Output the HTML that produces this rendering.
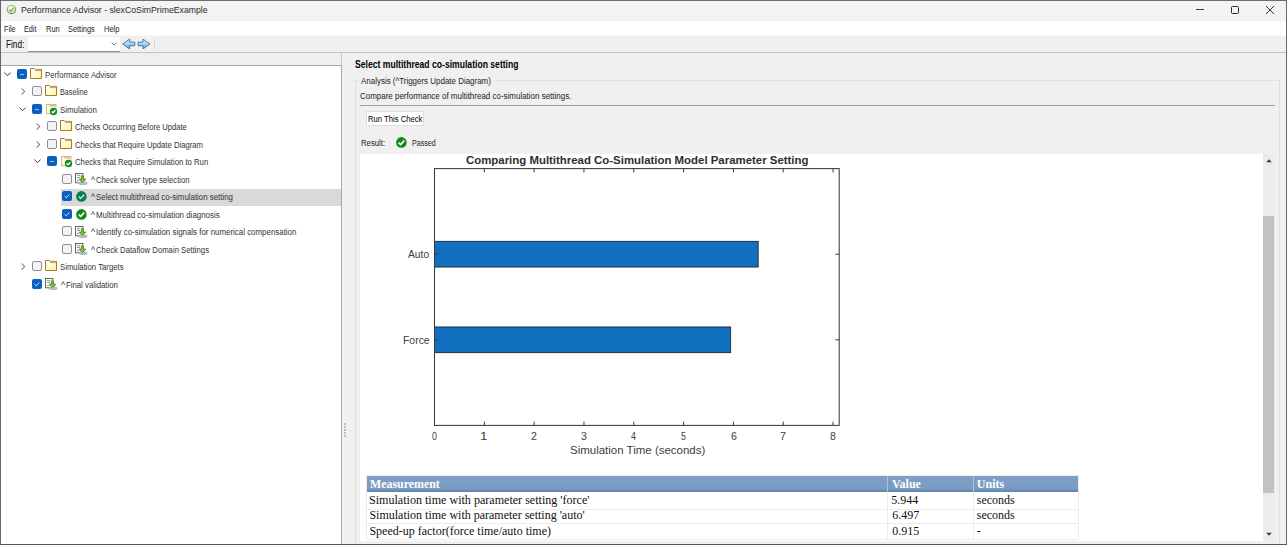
<!DOCTYPE html>
<html><head><meta charset="utf-8"><title>Performance Advisor</title>
<style>
html,body{margin:0;padding:0;}
body{width:1287px;height:545px;overflow:hidden;position:relative;background:#f0f0f0;font-family:"Liberation Sans",sans-serif;}
.a{position:absolute;}
.t{position:absolute;white-space:pre;}
.cb{width:10px;height:10px;box-sizing:border-box;border:1px solid #8f8f8f;border-radius:2px;background:#f3f3f3;}
.cbb{width:10px;height:10px;box-sizing:border-box;border-radius:2px;background:#0a5fc2;}
</style></head><body>
<svg width="0" height="0" style="position:absolute"><defs>
<linearGradient id="fgrad" x1="0" y1="0" x2="1" y2="1"><stop offset="0" stop-color="#ffffff"/><stop offset="0.45" stop-color="#fffbe3"/><stop offset="1" stop-color="#fff08a"/></linearGradient>
<linearGradient id="agrad" x1="0" y1="0" x2="0" y2="1"><stop offset="0" stop-color="#d8ecfa"/><stop offset="0.45" stop-color="#b5d8f2"/><stop offset="1" stop-color="#5b92c6"/></linearGradient>
<linearGradient id="tring" x1="0" y1="0" x2="0" y2="1"><stop offset="0" stop-color="#a2d05e"/><stop offset="1" stop-color="#5f8f3c"/></linearGradient>
<radialGradient id="tig" cx="0.4" cy="0.35" r="0.7"><stop offset="0" stop-color="#ffffff"/><stop offset="1" stop-color="#cfcfcf"/></radialGradient>
</defs></svg>

<!-- title bar -->
<div class="a" style="left:0;top:0;width:1287px;height:21px;background:#f3f3f3"></div>
<svg class="a" style="left:6px;top:4px" width="11" height="11" viewBox="0 0 11 11">
<circle cx="5.45" cy="5.4" r="4.2" fill="url(#tig)" stroke="url(#tring)" stroke-width="1.1"/>
<path d="M3.2 5.7 L4.8 7.1 L7.8 3.9" fill="none" stroke="#6fb334" stroke-width="1.3"/></svg>
<div class="t" style="left:20.50px;top:5px;font-size:9.8px;line-height:9.8px;font-weight:400;font-family:'Liberation Sans',sans-serif;color:#2a2a2a;letter-spacing:0px;transform:scaleX(0.8881);transform-origin:0 0;">Performance Advisor - slexCoSimPrimeExample</div>
<div class="a" style="left:1196px;top:9px;width:8px;height:1px;background:#3a3a3a"></div>
<div class="a" style="left:1231px;top:6px;width:8px;height:8px;box-sizing:border-box;border:1px solid #2a2a2a;border-radius:1.5px"></div>
<svg class="a" style="left:1265px;top:5px" width="10" height="10" viewBox="0 0 10 10"><path d="M1 1 L9 9 M9 1 L1 9" stroke="#2a2a2a" stroke-width="0.95"/></svg>

<!-- menu -->
<div class="a" style="left:0;top:21px;width:1287px;height:14px;background:#ffffff"></div><div class="a" style="left:0;top:35px;width:1287px;height:1px;background:#f7f7f7"></div>
<div class="t" style="left:4.20px;top:25px;font-size:8.5px;line-height:8.5px;font-weight:400;font-family:'Liberation Sans',sans-serif;color:#222222;letter-spacing:0px;transform:scaleX(0.8429);transform-origin:0 0;">File</div>
<div class="t" style="left:24.10px;top:25px;font-size:8.5px;line-height:8.5px;font-weight:400;font-family:'Liberation Sans',sans-serif;color:#222222;letter-spacing:0px;transform:scaleX(0.8533);transform-origin:0 0;">Edit</div>
<div class="t" style="left:45.80px;top:25px;font-size:8.5px;line-height:8.5px;font-weight:400;font-family:'Liberation Sans',sans-serif;color:#222222;letter-spacing:0px;transform:scaleX(0.8800);transform-origin:0 0;">Run</div>
<div class="t" style="left:68.00px;top:25px;font-size:8.5px;line-height:8.5px;font-weight:400;font-family:'Liberation Sans',sans-serif;color:#222222;letter-spacing:0px;transform:scaleX(0.8710);transform-origin:0 0;">Settings</div>
<div class="t" style="left:103.70px;top:25px;font-size:8.5px;line-height:8.5px;font-weight:400;font-family:'Liberation Sans',sans-serif;color:#222222;letter-spacing:0px;transform:scaleX(0.8833);transform-origin:0 0;">Help</div>

<!-- toolbar -->
<div class="a" style="left:0;top:36px;width:1287px;height:16px;background:#f0f0f0"></div>
<div class="t" style="left:5.93px;top:40px;font-size:10px;line-height:10px;font-weight:400;font-family:'Liberation Sans',sans-serif;color:#000;letter-spacing:0px;transform:scaleX(0.8214);transform-origin:0 0;">Find:</div>
<div class="a" style="left:27.7px;top:37px;width:92.5px;height:14.5px;background:#fff;border-bottom:1px solid #8f8f8f;box-sizing:border-box"></div>
<svg class="a" style="left:111px;top:42px" width="7" height="4" viewBox="0 0 7 4"><path d="M0.6 0.6 L3 3 L5.4 0.6" fill="none" stroke="#555" stroke-width="0.8"/></svg>
<svg class="a" style="left:122px;top:38px" width="14" height="12" viewBox="0 0 14 12"><path d="M0.7 6 L7.6 1.1 V4.1 H12.8 V7.7 H7.6 V10.9 Z" fill="url(#agrad)" stroke="#3a72a6" stroke-width="0.9" stroke-linejoin="round"/></svg>
<svg class="a" style="left:137px;top:38px" width="14" height="12" viewBox="0 0 14 12"><path d="M13 6 L6 1.1 V4.1 H1.1 V7.7 H6 V10.9 Z" fill="url(#agrad)" stroke="#3a72a6" stroke-width="0.9" stroke-linejoin="round"/></svg>
<div class="a" style="left:154px;top:38px;width:1px;height:12px;background:#d8d8d8"></div>
<div class="a" style="left:0;top:52px;width:1287px;height:1px;background:#c4c4c4"></div>

<!-- left panel -->
<div class="a" style="left:1px;top:53px;width:340px;height:12px;background:#efefef"></div>
<div class="a" style="left:1px;top:65px;width:341px;height:1px;background:#a3a7b1"></div>
<div class="a" style="left:1px;top:66px;width:340px;height:479px;background:#ffffff"></div>
<div class="a" style="left:341px;top:53px;width:1px;height:12px;background:#cbcbcb"></div><div class="a" style="left:341px;top:66px;width:1px;height:479px;background:#a6aab6"></div>
<svg class="a" style="left:4px;top:72px" width="8" height="5" viewBox="0 0 8 5"><path d="M0.4 0.6 L3.5 3.7 L6.6 0.6" fill="none" stroke="#2a2a2a" stroke-width="0.95"/></svg><div class="a cbb" style="left:17px;top:69px;"><div style="position:absolute;left:3px;top:5px;width:4px;height:1px;background:#9fc0ea"></div></div><svg class="a" style="left:30px;top:68px" width="13" height="12" viewBox="0 0 13 12"><g><path d="M0.5 0.5 H4.4 L5.2 1.4 H11.5 V10.5 H0.5 Z" fill="url(#fgrad)" stroke="#a97a28" stroke-width="1"/><rect x="5" y="1.6" width="6.2" height="1.5" fill="#d2a85a"/></g></svg><div class="t" style="left:45.20px;top:71px;font-size:8.5px;line-height:8.5px;font-weight:400;font-family:'Liberation Sans',sans-serif;color:#333333;letter-spacing:0px;transform:scaleX(0.9076);transform-origin:0 0;">Performance Advisor</div><svg class="a" style="left:20.5px;top:88px" width="5" height="8" viewBox="0 0 5 8"><path d="M0.6 0.5 L3.7 3.6 L0.6 6.7" fill="none" stroke="#7a7a7a" stroke-width="1.05"/></svg><div class="a cb" style="left:32px;top:86px;"></div><svg class="a" style="left:45px;top:85px" width="13" height="12" viewBox="0 0 13 12"><g><path d="M0.5 0.5 H4.4 L5.2 1.4 H11.5 V10.5 H0.5 Z" fill="url(#fgrad)" stroke="#a97a28" stroke-width="1"/><rect x="5" y="1.6" width="6.2" height="1.5" fill="#d2a85a"/></g></svg><div class="t" style="left:60.20px;top:88px;font-size:8.5px;line-height:8.5px;font-weight:400;font-family:'Liberation Sans',sans-serif;color:#333333;letter-spacing:0px;transform:scaleX(0.8515);transform-origin:0 0;">Baseline</div><svg class="a" style="left:19px;top:107px" width="8" height="5" viewBox="0 0 8 5"><path d="M0.4 0.6 L3.5 3.7 L6.6 0.6" fill="none" stroke="#2a2a2a" stroke-width="0.95"/></svg><div class="a cbb" style="left:32px;top:104px;"><div style="position:absolute;left:3px;top:5px;width:4px;height:1px;background:#9fc0ea"></div></div><svg class="a" style="left:45px;top:103px" width="13" height="13" viewBox="0 0 13 13"><rect x="1.5" y="1.5" width="9.4" height="9.2" fill="url(#fgrad)" stroke="#cfb27a" stroke-width="0.9"/><rect x="4.2" y="2" width="6.3" height="1.5" fill="#dcc28e"/><circle cx="8.5" cy="8.5" r="3.65" fill="#0f8d24"/><path d="M6.6 8.5 L8 9.8 L10.4 7.3" fill="none" stroke="#fff" stroke-width="1.3"/></svg><div class="t" style="left:60.20px;top:106px;font-size:8.5px;line-height:8.5px;font-weight:400;font-family:'Liberation Sans',sans-serif;color:#333333;letter-spacing:0px;transform:scaleX(0.9275);transform-origin:0 0;">Simulation</div><svg class="a" style="left:35.5px;top:123px" width="5" height="8" viewBox="0 0 5 8"><path d="M0.6 0.5 L3.7 3.6 L0.6 6.7" fill="none" stroke="#7a7a7a" stroke-width="1.05"/></svg><div class="a cb" style="left:47px;top:121px;"></div><svg class="a" style="left:60px;top:120px" width="13" height="12" viewBox="0 0 13 12"><g><path d="M0.5 0.5 H4.4 L5.2 1.4 H11.5 V10.5 H0.5 Z" fill="url(#fgrad)" stroke="#a97a28" stroke-width="1"/><rect x="5" y="1.6" width="6.2" height="1.5" fill="#d2a85a"/></g></svg><div class="t" style="left:75.20px;top:123px;font-size:8.5px;line-height:8.5px;font-weight:400;font-family:'Liberation Sans',sans-serif;color:#333333;letter-spacing:0px;transform:scaleX(0.8968);transform-origin:0 0;">Checks Occurring Before Update</div><svg class="a" style="left:35.5px;top:141px" width="5" height="8" viewBox="0 0 5 8"><path d="M0.6 0.5 L3.7 3.6 L0.6 6.7" fill="none" stroke="#7a7a7a" stroke-width="1.05"/></svg><div class="a cb" style="left:47px;top:139px;"></div><svg class="a" style="left:60px;top:138px" width="13" height="12" viewBox="0 0 13 12"><g><path d="M0.5 0.5 H4.4 L5.2 1.4 H11.5 V10.5 H0.5 Z" fill="url(#fgrad)" stroke="#a97a28" stroke-width="1"/><rect x="5" y="1.6" width="6.2" height="1.5" fill="#d2a85a"/></g></svg><div class="t" style="left:75.20px;top:141px;font-size:8.5px;line-height:8.5px;font-weight:400;font-family:'Liberation Sans',sans-serif;color:#333333;letter-spacing:0px;transform:scaleX(0.9064);transform-origin:0 0;">Checks that Require Update Diagram</div><svg class="a" style="left:34px;top:159px" width="8" height="5" viewBox="0 0 8 5"><path d="M0.4 0.6 L3.5 3.7 L6.6 0.6" fill="none" stroke="#2a2a2a" stroke-width="0.95"/></svg><div class="a cbb" style="left:47px;top:156px;"><div style="position:absolute;left:3px;top:5px;width:4px;height:1px;background:#9fc0ea"></div></div><svg class="a" style="left:60px;top:155px" width="13" height="13" viewBox="0 0 13 13"><rect x="1.5" y="1.5" width="9.4" height="9.2" fill="url(#fgrad)" stroke="#cfb27a" stroke-width="0.9"/><rect x="4.2" y="2" width="6.3" height="1.5" fill="#dcc28e"/><circle cx="8.5" cy="8.5" r="3.65" fill="#0f8d24"/><path d="M6.6 8.5 L8 9.8 L10.4 7.3" fill="none" stroke="#fff" stroke-width="1.3"/></svg><div class="t" style="left:75.20px;top:158px;font-size:8.5px;line-height:8.5px;font-weight:400;font-family:'Liberation Sans',sans-serif;color:#333333;letter-spacing:0px;transform:scaleX(0.9096);transform-origin:0 0;">Checks that Require Simulation to Run</div><div class="a cb" style="left:62px;top:174px;"></div><svg class="a" style="left:75px;top:173px" width="13" height="13" viewBox="0 0 13 13"><rect x="0.5" y="0.5" width="7.4" height="9.3" fill="#fbfbfb" stroke="#5e5e5e" stroke-width="0.95"/><path d="M2 2.6 H5.3 M2 4.5 H5 M2 7.5 H4.2" stroke="#8a8a8a" stroke-width="0.9"/><ellipse cx="8" cy="10.2" rx="4.3" ry="1.5" fill="#b3c3ca" stroke="#8fa3ab" stroke-width="0.5"/><path d="M6.4 2.9 H8.4 V6.1 H10.9 L7.4 9.6 L4.2 6.1 H6.4 Z" fill="#86bf3a" stroke="#4a8014" stroke-width="0.8"/></svg><div class="t" style="left:90.90px;top:176px;font-size:8.5px;line-height:8.5px;font-weight:400;font-family:'Liberation Sans',sans-serif;color:#333333;letter-spacing:0px;transform:scaleX(1.0000);transform-origin:0 0;">^</div><div class="t" style="left:95.90px;top:176px;font-size:8.5px;line-height:8.5px;font-weight:400;font-family:'Liberation Sans',sans-serif;color:#333333;letter-spacing:0px;transform:scaleX(0.9039);transform-origin:0 0;">Check solver type selection</div><div class="a" style="left:60.5px;top:188.5px;width:280.5px;height:17.5px;background:#d9d9d9"></div><div class="a cbb" style="left:62px;top:191px;"><svg style="position:absolute;left:0;top:0" width="10" height="10" viewBox="0 0 10 10"><path d="M2.6 5.2 L4.2 6.7 L7.4 3.5" fill="none" stroke="#fff" stroke-width="0.85"/></svg></div><svg class="a" style="left:75.5px;top:191px" width="11" height="11" viewBox="0 0 11 11"><circle cx="5.4" cy="5.4" r="5.3" fill="#0a7e45"/><path d="M2.7 5.5 L4.6 7.3 L8.2 3.6" fill="none" stroke="#a9d6f2" stroke-width="1.55"/></svg><div class="t" style="left:90.90px;top:193px;font-size:8.5px;line-height:8.5px;font-weight:400;font-family:'Liberation Sans',sans-serif;color:#333333;letter-spacing:0px;transform:scaleX(1.0000);transform-origin:0 0;">^</div><div class="t" style="left:95.90px;top:193px;font-size:8.5px;line-height:8.5px;font-weight:400;font-family:'Liberation Sans',sans-serif;color:#333333;letter-spacing:0px;transform:scaleX(0.9264);transform-origin:0 0;">Select multithread co-simulation setting</div><div class="a cbb" style="left:62px;top:209px;"><svg style="position:absolute;left:0;top:0" width="10" height="10" viewBox="0 0 10 10"><path d="M2.6 5.2 L4.2 6.7 L7.4 3.5" fill="none" stroke="#fff" stroke-width="0.85"/></svg></div><svg class="a" style="left:75.5px;top:209px" width="11" height="11" viewBox="0 0 11 11"><circle cx="5.4" cy="5.4" r="5.3" fill="#108a1e"/><path d="M2.7 5.5 L4.6 7.3 L8.2 3.6" fill="none" stroke="#ffffff" stroke-width="1.55"/></svg><div class="t" style="left:90.90px;top:211px;font-size:8.5px;line-height:8.5px;font-weight:400;font-family:'Liberation Sans',sans-serif;color:#333333;letter-spacing:0px;transform:scaleX(1.0000);transform-origin:0 0;">^</div><div class="t" style="left:95.90px;top:211px;font-size:8.5px;line-height:8.5px;font-weight:400;font-family:'Liberation Sans',sans-serif;color:#333333;letter-spacing:0px;transform:scaleX(0.9316);transform-origin:0 0;">Multithread co-simulation diagnosis</div><div class="a cb" style="left:62px;top:226px;"></div><svg class="a" style="left:75px;top:226px" width="13" height="13" viewBox="0 0 13 13"><rect x="0.5" y="0.5" width="7.4" height="9.3" fill="#fbfbfb" stroke="#5e5e5e" stroke-width="0.95"/><path d="M2 2.6 H5.3 M2 4.5 H5 M2 7.5 H4.2" stroke="#8a8a8a" stroke-width="0.9"/><ellipse cx="8" cy="10.2" rx="4.3" ry="1.5" fill="#b3c3ca" stroke="#8fa3ab" stroke-width="0.5"/><path d="M6.4 2.9 H8.4 V6.1 H10.9 L7.4 9.6 L4.2 6.1 H6.4 Z" fill="#86bf3a" stroke="#4a8014" stroke-width="0.8"/></svg><div class="t" style="left:90.90px;top:228px;font-size:8.5px;line-height:8.5px;font-weight:400;font-family:'Liberation Sans',sans-serif;color:#333333;letter-spacing:0px;transform:scaleX(1.0000);transform-origin:0 0;">^</div><div class="t" style="left:95.90px;top:228px;font-size:8.5px;line-height:8.5px;font-weight:400;font-family:'Liberation Sans',sans-serif;color:#333333;letter-spacing:0px;transform:scaleX(0.9302);transform-origin:0 0;">Identify co-simulation signals for numerical compensation</div><div class="a cb" style="left:62px;top:244px;"></div><svg class="a" style="left:75px;top:243px" width="13" height="13" viewBox="0 0 13 13"><rect x="0.5" y="0.5" width="7.4" height="9.3" fill="#fbfbfb" stroke="#5e5e5e" stroke-width="0.95"/><path d="M2 2.6 H5.3 M2 4.5 H5 M2 7.5 H4.2" stroke="#8a8a8a" stroke-width="0.9"/><ellipse cx="8" cy="10.2" rx="4.3" ry="1.5" fill="#b3c3ca" stroke="#8fa3ab" stroke-width="0.5"/><path d="M6.4 2.9 H8.4 V6.1 H10.9 L7.4 9.6 L4.2 6.1 H6.4 Z" fill="#86bf3a" stroke="#4a8014" stroke-width="0.8"/></svg><div class="t" style="left:90.90px;top:246px;font-size:8.5px;line-height:8.5px;font-weight:400;font-family:'Liberation Sans',sans-serif;color:#333333;letter-spacing:0px;transform:scaleX(1.0000);transform-origin:0 0;">^</div><div class="t" style="left:95.90px;top:246px;font-size:8.5px;line-height:8.5px;font-weight:400;font-family:'Liberation Sans',sans-serif;color:#333333;letter-spacing:0px;transform:scaleX(0.9097);transform-origin:0 0;">Check Dataflow Domain Settings</div><svg class="a" style="left:20.5px;top:263px" width="5" height="8" viewBox="0 0 5 8"><path d="M0.6 0.5 L3.7 3.6 L0.6 6.7" fill="none" stroke="#7a7a7a" stroke-width="1.05"/></svg><div class="a cb" style="left:32px;top:261px;"></div><svg class="a" style="left:45px;top:260px" width="13" height="12" viewBox="0 0 13 12"><g><path d="M0.5 0.5 H4.4 L5.2 1.4 H11.5 V10.5 H0.5 Z" fill="url(#fgrad)" stroke="#a97a28" stroke-width="1"/><rect x="5" y="1.6" width="6.2" height="1.5" fill="#d2a85a"/></g></svg><div class="t" style="left:60.20px;top:263px;font-size:8.5px;line-height:8.5px;font-weight:400;font-family:'Liberation Sans',sans-serif;color:#333333;letter-spacing:0px;transform:scaleX(0.9114);transform-origin:0 0;">Simulation Targets</div><div class="a cbb" style="left:32px;top:279px;"><svg style="position:absolute;left:0;top:0" width="10" height="10" viewBox="0 0 10 10"><path d="M2.6 5.2 L4.2 6.7 L7.4 3.5" fill="none" stroke="#fff" stroke-width="0.85"/></svg></div><svg class="a" style="left:45px;top:278px" width="13" height="13" viewBox="0 0 13 13"><rect x="0.5" y="0.5" width="7.4" height="9.3" fill="#fbfbfb" stroke="#5e5e5e" stroke-width="0.95"/><path d="M2 2.6 H5.3 M2 4.5 H5 M2 7.5 H4.2" stroke="#8a8a8a" stroke-width="0.9"/><ellipse cx="8" cy="10.2" rx="4.3" ry="1.5" fill="#b3c3ca" stroke="#8fa3ab" stroke-width="0.5"/><path d="M6.4 2.9 H8.4 V6.1 H10.9 L7.4 9.6 L4.2 6.1 H6.4 Z" fill="#86bf3a" stroke="#4a8014" stroke-width="0.8"/></svg><div class="t" style="left:60.90px;top:281px;font-size:8.5px;line-height:8.5px;font-weight:400;font-family:'Liberation Sans',sans-serif;color:#333333;letter-spacing:0px;transform:scaleX(1.0000);transform-origin:0 0;">^</div><div class="t" style="left:65.90px;top:281px;font-size:8.5px;line-height:8.5px;font-weight:400;font-family:'Liberation Sans',sans-serif;color:#333333;letter-spacing:0px;transform:scaleX(0.9140);transform-origin:0 0;">Final validation</div>

<!-- splitter -->
<div class="a" style="left:342px;top:53px;width:13px;height:492px;background:#f0f0f0"></div>
<div class="a" style="left:344px;top:423px;width:2px;height:14px;background:repeating-linear-gradient(#bdbdbd 0 1.5px, transparent 1.5px 3px)"></div>

<!-- right panel -->
<div class="t" style="left:355.00px;top:60px;font-size:10px;line-height:10px;font-weight:700;font-family:'Liberation Sans',sans-serif;color:#000;letter-spacing:0px;transform:scaleX(0.8605);transform-origin:0 0;">Select multithread co-simulation setting</div>
<div class="a" style="left:355px;top:80px;width:925px;height:470px;border:1px solid #dfdfdf;box-sizing:border-box"></div>
<div class="a" style="left:359px;top:76px;width:136px;height:10px;background:#f0f0f0"></div>
<div class="t" style="left:360.50px;top:77px;font-size:8.5px;line-height:8.5px;font-weight:400;font-family:'Liberation Sans',sans-serif;color:#222222;letter-spacing:0px;transform:scaleX(0.9360);transform-origin:0 0;">Analysis (^Triggers Update Diagram)</div>
<div class="t" style="left:360.00px;top:92px;font-size:8.5px;line-height:8.5px;font-weight:400;font-family:'Liberation Sans',sans-serif;color:#222222;letter-spacing:0px;transform:scaleX(0.9378);transform-origin:0 0;">Compare performance of multithread co-simulation settings.</div>
<div class="a" style="left:360px;top:105px;width:915px;height:1px;background:#a0a0a0"></div>
<div class="a" style="left:365.5px;top:110.5px;width:58.5px;height:15px;background:#fff;border:1px solid #dedede;box-sizing:border-box"></div>
<div class="t" style="left:367.90px;top:115px;font-size:8.5px;line-height:8.5px;font-weight:400;font-family:'Liberation Sans',sans-serif;color:#000;letter-spacing:0px;transform:scaleX(0.9017);transform-origin:0 0;">Run This Check</div>
<div class="t" style="left:361.00px;top:139px;font-size:8.5px;line-height:8.5px;font-weight:400;font-family:'Liberation Sans',sans-serif;color:#222222;letter-spacing:0px;transform:scaleX(0.9115);transform-origin:0 0;">Result:</div>
<svg class="a" style="left:395.5px;top:137px" width="11" height="11" viewBox="0 0 11 11"><circle cx="5.4" cy="5.4" r="5.3" fill="#118a1c"/><path d="M2.6 5.6 L4.6 7.5 L8.3 3.6" fill="none" stroke="#fff" stroke-width="1.6"/></svg>
<div class="t" style="left:411.90px;top:139px;font-size:8.5px;line-height:8.5px;font-weight:400;font-family:'Liberation Sans',sans-serif;color:#222222;letter-spacing:0px;transform:scaleX(0.8321);transform-origin:0 0;">Passed</div>

<!-- browser area -->
<div class="a" style="left:360px;top:154px;width:902.6px;height:387px;background:#ffffff"></div>
<svg class="a" style="left:0;top:0" width="1287" height="545" viewBox="0 0 1287 545"><rect x="434.50" y="241.36" width="323.68" height="25.68" fill="#1170c0" stroke="#262626" stroke-width="0.9"/><rect x="434.50" y="326.96" width="296.13" height="25.68" fill="#1170c0" stroke="#262626" stroke-width="0.9"/><rect x="434.50" y="168.60" width="404.70" height="256.80" fill="none" stroke="#3c3c3c" stroke-width="1.05"/><path d="M434.50 425.40 V421.60 M434.50 168.60 V172.40" stroke="#3c3c3c" stroke-width="1"/><path d="M484.32 425.40 V421.60 M484.32 168.60 V172.40" stroke="#3c3c3c" stroke-width="1"/><path d="M534.14 425.40 V421.60 M534.14 168.60 V172.40" stroke="#3c3c3c" stroke-width="1"/><path d="M583.96 425.40 V421.60 M583.96 168.60 V172.40" stroke="#3c3c3c" stroke-width="1"/><path d="M633.78 425.40 V421.60 M633.78 168.60 V172.40" stroke="#3c3c3c" stroke-width="1"/><path d="M683.60 425.40 V421.60 M683.60 168.60 V172.40" stroke="#3c3c3c" stroke-width="1"/><path d="M733.42 425.40 V421.60 M733.42 168.60 V172.40" stroke="#3c3c3c" stroke-width="1"/><path d="M783.24 425.40 V421.60 M783.24 168.60 V172.40" stroke="#3c3c3c" stroke-width="1"/><path d="M833.06 425.40 V421.60 M833.06 168.60 V172.40" stroke="#3c3c3c" stroke-width="1"/><path d="M434.50 254.20 H438.30 M839.2 254.20 H835.40" stroke="#3c3c3c" stroke-width="1"/><path d="M434.50 339.80 H438.30 M839.2 339.80 H835.40" stroke="#3c3c3c" stroke-width="1"/></svg><div class="t" style="left:431.70px;top:432px;font-size:10px;line-height:10px;font-weight:400;font-family:'Liberation Sans',sans-serif;color:#404040;letter-spacing:0px;transform:scaleX(0.8833);transform-origin:0 0;">0</div><div class="t" style="left:480.19px;top:432px;font-size:10px;line-height:10px;font-weight:400;font-family:'Liberation Sans',sans-serif;color:#404040;letter-spacing:0px;transform:scaleX(1.3250);transform-origin:0 0;">1</div><div class="t" style="left:531.34px;top:432px;font-size:10px;line-height:10px;font-weight:400;font-family:'Liberation Sans',sans-serif;color:#404040;letter-spacing:0px;transform:scaleX(1.0600);transform-origin:0 0;">2</div><div class="t" style="left:581.16px;top:432px;font-size:10px;line-height:10px;font-weight:400;font-family:'Liberation Sans',sans-serif;color:#404040;letter-spacing:0px;transform:scaleX(1.0600);transform-origin:0 0;">3</div><div class="t" style="left:630.98px;top:432px;font-size:10px;line-height:10px;font-weight:400;font-family:'Liberation Sans',sans-serif;color:#404040;letter-spacing:0px;transform:scaleX(0.8833);transform-origin:0 0;">4</div><div class="t" style="left:680.80px;top:432px;font-size:10px;line-height:10px;font-weight:400;font-family:'Liberation Sans',sans-serif;color:#404040;letter-spacing:0px;transform:scaleX(0.8833);transform-origin:0 0;">5</div><div class="t" style="left:730.62px;top:432px;font-size:10px;line-height:10px;font-weight:400;font-family:'Liberation Sans',sans-serif;color:#404040;letter-spacing:0px;transform:scaleX(1.0600);transform-origin:0 0;">6</div><div class="t" style="left:780.44px;top:432px;font-size:10px;line-height:10px;font-weight:400;font-family:'Liberation Sans',sans-serif;color:#404040;letter-spacing:0px;transform:scaleX(1.0600);transform-origin:0 0;">7</div><div class="t" style="left:830.26px;top:432px;font-size:10px;line-height:10px;font-weight:400;font-family:'Liberation Sans',sans-serif;color:#404040;letter-spacing:0px;transform:scaleX(1.0600);transform-origin:0 0;">8</div><div class="t" style="left:408.30px;top:249px;font-size:10.5px;line-height:10.5px;font-weight:400;font-family:'Liberation Sans',sans-serif;color:#404040;letter-spacing:0px;transform:scaleX(0.9773);transform-origin:0 0;">Auto</div><div class="t" style="left:402.71px;top:335px;font-size:10.5px;line-height:10.5px;font-weight:400;font-family:'Liberation Sans',sans-serif;color:#404040;letter-spacing:0px;transform:scaleX(0.9923);transform-origin:0 0;">Force</div><div class="t" style="left:569.70px;top:445px;font-size:11.5px;line-height:11.5px;font-weight:400;font-family:'Liberation Sans',sans-serif;color:#404040;letter-spacing:0px;transform:scaleX(0.9985);transform-origin:0 0;">Simulation Time (seconds)</div><div class="t" style="left:465.60px;top:155px;font-size:11.5px;line-height:11.5px;font-weight:700;font-family:'Liberation Sans',sans-serif;color:#2e2e2e;letter-spacing:0px;transform:scaleX(0.9925);transform-origin:0 0;">Comparing Multithread Co-Simulation Model Parameter Setting</div>
<div class="a" style="left:366px;top:474.5px;width:712.5px;height:65px;border:1px solid #ececec;box-sizing:border-box"></div><div class="a" style="left:366.5px;top:476.3px;width:711.5px;height:15.7px;background:linear-gradient(#7ea0c6,#789bc2 80%,#5f80a8)"></div><div class="a" style="left:887px;top:476.3px;width:1px;height:15.7px;background:#a9bfd8"></div><div class="a" style="left:972.5px;top:476.3px;width:1px;height:15.7px;background:#a9bfd8"></div><div class="a" style="left:366.5px;top:508.5px;width:711.5px;height:1px;background:#ececec"></div><div class="a" style="left:366.5px;top:523.3px;width:711.5px;height:1px;background:#ececec"></div><div class="a" style="left:887px;top:492px;width:1px;height:47px;background:#ececec"></div><div class="a" style="left:972.5px;top:492px;width:1px;height:47px;background:#ececec"></div><div class="t" style="left:370.40px;top:478px;font-size:12px;line-height:12px;font-weight:700;font-family:'Liberation Serif',sans-serif;color:#fff;letter-spacing:0px;transform:scaleX(0.9915);transform-origin:0 0;">Measurement</div><div class="t" style="left:892.00px;top:478px;font-size:12px;line-height:12px;font-weight:700;font-family:'Liberation Serif',sans-serif;color:#fff;letter-spacing:0px;transform:scaleX(1.0000);transform-origin:0 0;">Value</div><div class="t" style="left:976.80px;top:478px;font-size:12px;line-height:12px;font-weight:700;font-family:'Liberation Serif',sans-serif;color:#fff;letter-spacing:0px;transform:scaleX(1.0000);transform-origin:0 0;">Units</div><div class="t" style="left:369.39px;top:494px;font-size:12px;line-height:12px;font-weight:400;font-family:'Liberation Serif',sans-serif;color:#111;letter-spacing:0px;transform:scaleX(1.0055);transform-origin:0 0;">Simulation time with parameter setting 'force'</div><div class="t" style="left:891.20px;top:494px;font-size:12px;line-height:12px;font-weight:400;font-family:'Liberation Serif',sans-serif;color:#111;letter-spacing:0px;transform:scaleX(1.0000);transform-origin:0 0;">5.944</div><div class="t" style="left:976.80px;top:494px;font-size:12px;line-height:12px;font-weight:400;font-family:'Liberation Serif',sans-serif;color:#111;letter-spacing:0px;transform:scaleX(1.0000);transform-origin:0 0;">seconds</div><div class="t" style="left:369.40px;top:509px;font-size:12px;line-height:12px;font-weight:400;font-family:'Liberation Serif',sans-serif;color:#111;letter-spacing:0px;transform:scaleX(1.0000);transform-origin:0 0;">Simulation time with parameter setting 'auto'</div><div class="t" style="left:892.20px;top:509px;font-size:12px;line-height:12px;font-weight:400;font-family:'Liberation Serif',sans-serif;color:#111;letter-spacing:0px;transform:scaleX(1.0000);transform-origin:0 0;">6.497</div><div class="t" style="left:976.80px;top:509px;font-size:12px;line-height:12px;font-weight:400;font-family:'Liberation Serif',sans-serif;color:#111;letter-spacing:0px;transform:scaleX(1.0000);transform-origin:0 0;">seconds</div><div class="t" style="left:369.40px;top:525px;font-size:12px;line-height:12px;font-weight:400;font-family:'Liberation Serif',sans-serif;color:#111;letter-spacing:0px;transform:scaleX(1.0000);transform-origin:0 0;">Speed-up factor(force time/auto time)</div><div class="t" style="left:892.20px;top:525px;font-size:12px;line-height:12px;font-weight:400;font-family:'Liberation Serif',sans-serif;color:#111;letter-spacing:0px;transform:scaleX(1.0000);transform-origin:0 0;">0.915</div><div class="t" style="left:976.80px;top:525px;font-size:12px;line-height:12px;font-weight:400;font-family:'Liberation Serif',sans-serif;color:#111;letter-spacing:0px;transform:scaleX(1.0000);transform-origin:0 0;">-</div>
<div class="a" style="left:1262.6px;top:154px;width:12px;height:387px;background:#ececec"></div>
<div class="a" style="left:1263.4px;top:216px;width:10.8px;height:277px;background:#c2c2c2"></div>
<svg class="a" style="left:1265px;top:158px" width="8" height="5" viewBox="0 0 8 5"><path d="M1.2 4.3 L4 1.3 L6.8 4.3 Z" fill="#3a3a3a"/></svg>
<svg class="a" style="left:1265px;top:532px" width="8" height="5" viewBox="0 0 8 5"><path d="M1.2 0.7 L4 3.7 L6.8 0.7 Z" fill="#3a3a3a"/></svg>

<!-- window border -->
<div class="a" style="left:0;top:0;width:1287px;height:1px;background:#6e6e6e"></div>
<div class="a" style="left:0;top:0;width:1px;height:545px;background:#666"></div>
<div class="a" style="left:1286px;top:0;width:1px;height:545px;background:#666"></div>
<div class="a" style="left:0;top:544px;width:1287px;height:1px;background:#555"></div>
</body></html>
